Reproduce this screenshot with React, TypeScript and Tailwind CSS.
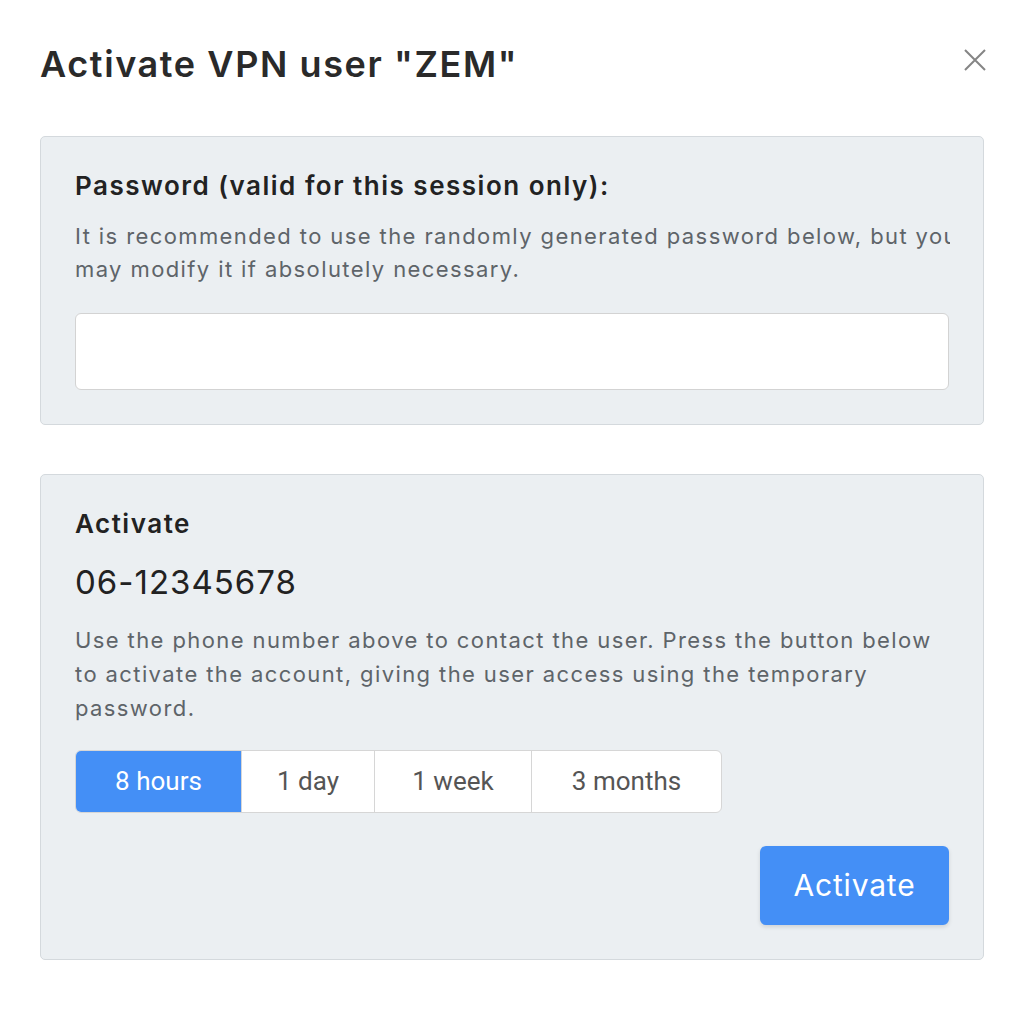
import React from "react";

export default function App() {
  const durations = ["8 hours", "1 day", "1 week", "3 months"];
  return (
    <div className="min-h-[1030px] w-[1024px] bg-white text-[#222] [font-family:Inter,'Noto_Sans',sans-serif]">
      <div className="px-10 pt-[36px]">
        <div className="flex items-start justify-between">
          <h1 className="text-[36px] leading-[56px] font-semibold tracking-[1.6px] text-[#2a2a2a]">Activate VPN user "ZEM"</h1>
          <button className="mt-[11px] mr-[-4px] flex h-[26px] w-[26px] items-center justify-center">
            <svg width="22" height="22" viewBox="0 0 22 22" fill="none" stroke="#858585" strokeWidth="2">
              <path d="M1 1 L21 21 M21 1 L1 21" />
            </svg>
          </button>
        </div>

        <div className="mt-[44px] rounded-[5px] border border-[#d4d9dd] bg-[#ebeff2] px-[34px] pt-[33px] pb-[34px]">
          <div className="text-[26px] leading-[32px] font-semibold tracking-[1.5px] text-[#222]">Password (valid for this session only):</div>
          <div className="mt-[18px] text-[22px] leading-[33px] tracking-[1.4px] text-[#5e6469]">
            <div className="w-[875px] overflow-hidden whitespace-nowrap">It is recommended to use the randomly generated password below, but you</div>
            <div>may modify it if absolutely necessary.</div>
          </div>
          <input className="mt-[27px] block h-[77px] w-full rounded-[6px] border border-[#d3d3d3] bg-white px-4 text-[20px] outline-none" type="text" />
        </div>

        <div className="mt-[49px] rounded-[5px] border border-[#d4d9dd] bg-[#ebeff2] px-[34px] pt-[33px] pb-[34px]">
          <div className="text-[26px] leading-[32px] font-semibold tracking-[1.5px] text-[#222]">Activate</div>
          <div className="mt-[22px] text-[33px] leading-[40px] tracking-[1px] text-[#222]">06-12345678</div>
          <div className="mt-[21px] text-[22px] leading-[34px] tracking-[1.4px] text-[#5e6469]">
            Use the phone number above to contact the user. Press the button below to activate the account, giving the user access using the temporary password.
          </div>
          <div className="mt-[25px] flex">
            <div className="flex h-[63px] overflow-hidden rounded-[6px] border border-[#d6d6d6] bg-white [font-family:Roboto,sans-serif]">
              {durations.map((d, i) => (
                <button
                  key={d}
                  className={
                    i === 0
                      ? "flex w-[165px] items-center justify-center bg-[#448ff6] text-[26px] text-white"
                      : i === 1
                      ? "flex w-[133px] items-center justify-center border-l border-[#d6d6d6] text-[26px] text-[#555]"
                      : i === 2
                      ? "flex w-[157px] items-center justify-center border-l border-[#d6d6d6] text-[26px] text-[#555]"
                      : "flex w-[190px] items-center justify-center border-l border-[#d6d6d6] text-[26px] text-[#555]"
                  }
                >
                  {d}
                </button>
              ))}
            </div>
          </div>
          <div className="mt-[33px] flex justify-end">
            <button className="h-[79px] w-[189px] rounded-[6px] bg-[#448ff6] text-[30px] tracking-[0.8px] text-white shadow-[0_2px_4px_rgba(0,0,0,0.12)]">
              Activate
            </button>
          </div>
        </div>
      </div>
    </div>
  );
}
